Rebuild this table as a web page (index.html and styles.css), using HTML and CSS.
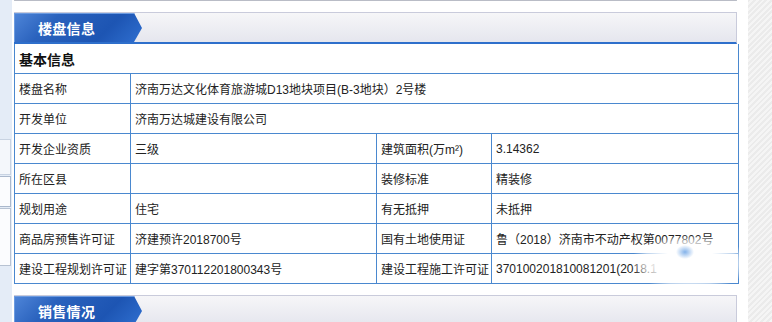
FILE: index.html
```html
<!DOCTYPE html>
<html lang="zh">
<head>
<meta charset="utf-8">
<title>楼盘信息</title>
<link rel="stylesheet" href="styles.css">
</head>
<body>
<div class="page">
  <aside class="left-strip">
    <div class="ls-box ls-a"></div>
    <div class="ls-box ls-b"></div>
    <div class="ls-box ls-c"></div>
  </aside>
  <main class="main">
    <div class="prev-box"></div>
    <section class="panel">
      <div class="panel-head">
        <div class="tab"><span>楼盘信息</span></div>
      </div>
      <div class="table-wrap">
        <table class="info">
          <colgroup>
            <col class="c1"><col class="c2"><col class="c3"><col class="c4">
          </colgroup>
          <tr><th colspan="4" class="sub">基本信息</th></tr>
          <tr><td>楼盘名称</td><td colspan="3">济南万达文化体育旅游城D13地块项目(B-3地块）2号楼</td></tr>
          <tr><td>开发单位</td><td colspan="3">济南万达城建设有限公司</td></tr>
          <tr><td>开发企业资质</td><td>三级</td><td>建筑面积(万m²)</td><td>3.14362</td></tr>
          <tr><td>所在区县</td><td></td><td>装修标准</td><td>精装修</td></tr>
          <tr><td>规划用途</td><td>住宅</td><td>有无抵押</td><td>未抵押</td></tr>
          <tr><td>商品房预售许可证</td><td>济建预许2018700号</td><td>国有土地使用证</td><td>鲁（2018）济南市不动产权第0077802号</td></tr>
          <tr><td>建设工程规划许可证</td><td>建字第370112201800343号</td><td>建设工程施工许可证</td><td>370100201810081201(2018.1</td></tr>
        </table>
        <div class="blur"></div>
      </div>
    </section>
    <section class="panel next">
      <div class="panel-head">
        <div class="tab"><span>销售情况</span></div>
      </div>
    </section>
  </main>
  <aside class="right-strip"></aside>
</div>
</body>
</html>
```
FILE: styles.css
```css
html, body {
  margin: 0;
  padding: 0;
  background: #ffffff;
}
body {
  font-family: "Liberation Sans", "Noto Sans CJK SC", sans-serif;
  font-size: 12px;
  color: #222;
  width: 772px;
  height: 322px;
  overflow: hidden;
}
.page {
  display: flex;
  height: 322px;
}
.left-strip {
  width: 12px;
  flex: none;
  background: #e4ecf7;
  position: relative;
}
.ls-box {
  position: absolute;
  left: -2px;
  width: 11px;
  background: #fbfcfe;
  border: 1px solid #9aaac0;
}
.ls-a { top: 139px; height: 34px; background: #f4f7fb; border-color: #c8d3e2; }
.ls-b { top: 176px; height: 29px; border-color: #aab8cc; }
.ls-c { top: 208px; height: 56px; border-color: #b7c2d2; }
.main {
  margin-left: 2px;
  width: 724px;
  flex: none;
  display: flex;
  flex-direction: column;
}
.prev-box {
  height: 2px;
  border: 1px solid #b9bcc6;
  border-top: none;
  border-radius: 0 0 3px 3px;
  background: #f4f4f6;
  margin-right: 1px;
}
.panel {
  margin-top: 11px;
}
.panel.next {
  margin-top: 11px;
}
.panel-head {
  height: 29px;
  border: 1px solid #c9cbdb;
  border-bottom: 2px solid #2e6fcb;
  border-left: none;
  background: linear-gradient(#f6f6f8, #e5e6ee);
  display: flex;
  margin-right: 1px;
}
.next .panel-head {
  border-bottom: none;
}
.tab {
  width: 128px;
  height: 29px;
  background: linear-gradient(135deg, #4f86d9 0%, #2a62bd 30%, #1d55b3 70%, #2f6fd0 100%);
  clip-path: polygon(0 0, 120px 0, 128px 15px, 120px 29px, 0 29px);
  display: flex;
  align-items: center;
  padding-left: 24px;
  box-sizing: border-box;
  box-shadow: inset 1px 1px 0 #6c9be0;
}
.tab span {
  color: #ffffff;
  font-family: "Noto Sans CJK SC", sans-serif;
  font-weight: bold;
  font-size: 14px;
  letter-spacing: 0.3px;
}
.table-wrap {
  position: relative;
}
.info {
  width: 724px;
  border-collapse: collapse;
  table-layout: fixed;
}
.c1 { width: 116px; }
.c2 { width: 246px; }
.c3 { width: 115px; }
.c4 { width: 247px; }
.info td, .info th {
  border: 1px solid #4a88cf;
  height: 29px;
  padding: 0 0 0 4px;
  text-align: left;
  white-space: nowrap;
  overflow: hidden;
  font-weight: normal;
  color: #222;
}
.info tr:first-child th {
  border-top: none;
}
.info th.sub {
  font-family: "Noto Sans CJK SC", sans-serif;
  font-weight: bold;
  font-size: 14px;
  color: #111;
  height: 29px;
}
.blur {
  position: absolute;
  left: 620px;
  top: 185px;
  width: 130px;
  height: 80px;
  background:
    radial-gradient(ellipse 9px 7px at 51px 23px, rgba(110,165,230,0.85), rgba(110,165,230,0) 100%),
    radial-gradient(ellipse 60px 28px at 56px 34px, rgba(255,255,255,1) 50%, rgba(255,255,255,0.6) 80%, rgba(255,255,255,0) 100%);
}
.right-strip {
  margin-left: 10px;
  flex: 1;
  background: repeating-linear-gradient(135deg, #ebebeb 0 2px, #f5f5f5 2px 4px);
}
```
